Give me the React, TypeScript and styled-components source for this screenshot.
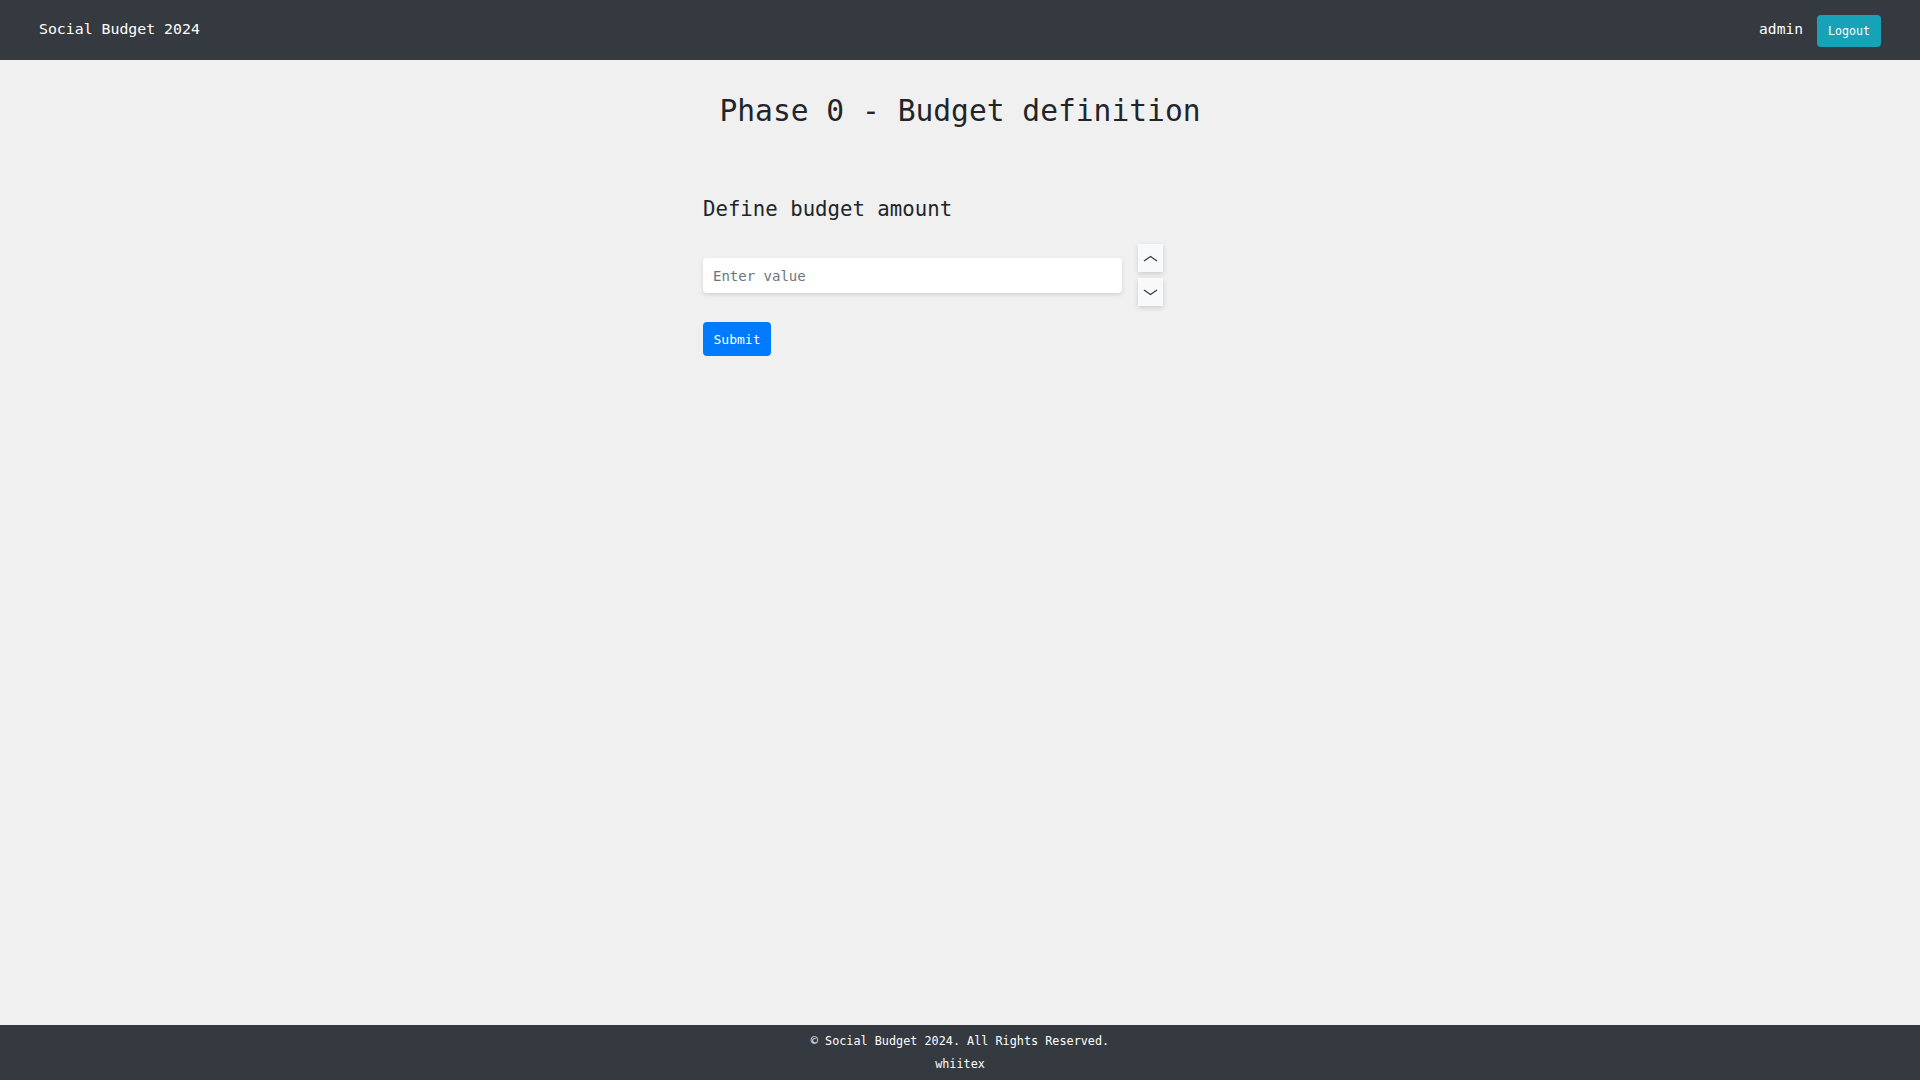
import React from "react";
import styled, { createGlobalStyle } from "styled-components";

const GlobalStyle = createGlobalStyle`
  html, body {
    margin: 0;
    padding: 0;
    background: #f0f0f0;
    font-family: "DejaVu Sans Mono", "Liberation Mono", monospace;
    color: #212529;
  }
  * { box-sizing: border-box; }
`;

const Page = styled.div`
  min-height: 100vh;
  display: flex;
  flex-direction: column;
`;

const NavBar = styled.header`
  height: 60px;
  background: #343a40;
  display: flex;
  align-items: center;
  justify-content: space-between;
  padding: 0 39px;
`;

const Brand = styled.div`
  color: #ffffff;
  font-size: 14.85px;
  line-height: 20px;
  margin-top: -2px;
`;

const NavRight = styled.div`
  display: flex;
  align-items: center;
  gap: 14px;
`;

const UserName = styled.span`
  color: #ffffff;
  font-size: 14.6px;
  line-height: 20px;
  margin-top: -3px;
`;

const Button = styled.button<{ $variant: "info" | "primary" }>`
  border: none;
  border-radius: 4px;
  color: #ffffff;
  font-family: inherit;
  cursor: pointer;
  display: flex;
  align-items: center;
  justify-content: center;
  padding: 0;
  background: ${(p) => (p.$variant === "info" ? "#17a2b8" : "#007bff")};
  width: ${(p) => (p.$variant === "info" ? "64px" : "68px")};
  height: ${(p) => (p.$variant === "info" ? "32px" : "34px")};
  font-size: ${(p) => (p.$variant === "info" ? "11.6px" : "13px")};
  margin-top: ${(p) => (p.$variant === "info" ? "2px" : "0")};
`;

const Main = styled.main`
  flex: 1;
  display: flex;
  flex-direction: column;
  align-items: center;
`;

const Title = styled.h1`
  margin: 33px 0 0;
  font-weight: 400;
  font-size: 29.6px;
  line-height: 36px;
  text-align: center;
`;

const FormSection = styled.section`
  width: 514px;
  margin-top: 68px;
  display: flex;
  flex-direction: column;
  align-items: flex-start;
`;

const SectionTitle = styled.h4`
  margin: 0;
  font-weight: 400;
  font-size: 20.7px;
  line-height: 25px;
`;

const InputRow = styled.div`
  margin-top: 22px;
  display: flex;
  align-items: center;
  gap: 16px;
`;

const ValueInput = styled.input`
  width: 419px;
  height: 35px;
  border: none;
  border-radius: 4px;
  background: #ffffff;
  box-shadow: 0 2px 4px rgba(0, 0, 0, 0.12);
  padding: 1px 10px 0;
  font-family: inherit;
  font-size: 14px;
  color: #495057;
  outline: none;
  &::placeholder {
    color: #6c757d;
  }
`;

const Spinner = styled.div`
  display: flex;
  flex-direction: column;
  gap: 6px;
`;

const SpinButton = styled.button`
  width: 25px;
  height: 28px;
  border: none;
  padding: 0;
  background: #f8f9fa;
  box-shadow: 0 2px 5px rgba(0, 0, 0, 0.15);
  display: flex;
  align-items: center;
  justify-content: center;
  cursor: pointer;
`;

const SubmitRow = styled.div`
  margin-top: 16px;
`;

const Footer = styled.footer`
  height: 55px;
  background: #343a40;
  color: #ffffff;
  padding-top: 5px;
  text-align: center;
  font-size: 11.8px;
  line-height: 23px;
`;

const FooterLine = styled.div``;

const Chevron = ({ up }: { up?: boolean }) => (
  <svg width="15" height="7" viewBox="0 0 15 7" fill="none">
    <path
      d={up ? "M1 6 L7.5 1.5 L14 6" : "M1 1 L7.5 5.5 L14 1"}
      stroke="#343a40"
      strokeWidth="1.2"
    />
  </svg>
);

export default function App() {
  return (
    <>
      <GlobalStyle />
      <Page>
        <NavBar>
          <Brand>Social Budget 2024</Brand>
          <NavRight>
            <UserName>admin</UserName>
            <Button $variant="info">Logout</Button>
          </NavRight>
        </NavBar>
        <Main>
          <Title>Phase 0 - Budget definition</Title>
          <FormSection>
            <SectionTitle>Define budget amount</SectionTitle>
            <InputRow>
              <ValueInput type="text" placeholder="Enter value" />
              <Spinner>
                <SpinButton aria-label="increase">
                  <Chevron up />
                </SpinButton>
                <SpinButton aria-label="decrease">
                  <Chevron />
                </SpinButton>
              </Spinner>
            </InputRow>
            <SubmitRow>
              <Button $variant="primary">Submit</Button>
            </SubmitRow>
          </FormSection>
        </Main>
        <Footer>
          <FooterLine>© Social Budget 2024. All Rights Reserved.</FooterLine>
          <FooterLine>whiitex</FooterLine>
        </Footer>
      </Page>
    </>
  );
}
